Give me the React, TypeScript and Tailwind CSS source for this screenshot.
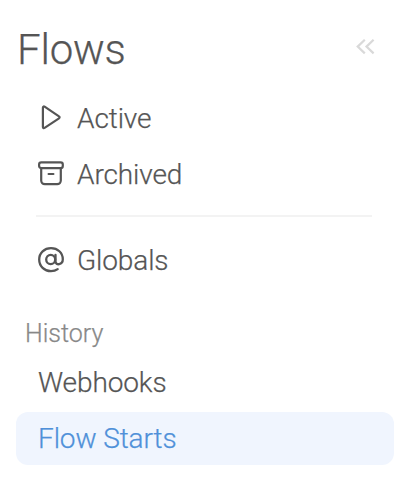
import type { ReactNode } from "react";

interface NavItemProps {
  label: string;
  icon?: ReactNode;
  active?: boolean;
}

const PlayIcon = () => (
  <svg width="26" height="26" viewBox="0 0 26 26" fill="none" stroke="currentColor" strokeWidth="2.2" strokeLinejoin="round">
    <path d="M4.9 2.7C4.9 1.6 5.7 1.2 6.6 1.7L21 11.4C21.8 11.9 21.8 12.8 21 13.3L6.6 22.9C5.7 23.4 4.9 23 4.9 21.9Z" />
  </svg>
);

const ArchiveIcon = () => (
  <svg width="26" height="26" viewBox="0 0 26 26" fill="none" stroke="currentColor" strokeWidth="2.2" strokeLinecap="round">
    <rect x="1.1" y="1.3" width="23.7" height="5.8" rx="2.2" />
    <path d="M3.2 7V19.6a3.6 3.6 0 0 0 3.6 3.6h12.4a3.6 3.6 0 0 0 3.6-3.6V7M10.6 13h4.8" />
  </svg>
);

const AtIcon = () => (
  <svg width="26" height="26" viewBox="0 0 26 26" fill="none" stroke="currentColor" strokeWidth="2.3" strokeLinecap="round">
    <ellipse cx="12.7" cy="12.5" rx="4.5" ry="4.7" />
    <path d="M17.5 7.8V14.3c0 4.5 7.3 3.8 7.3-2C24.8 5.7 19.6 1.2 13 1.2S1.2 5.8 1.2 12.5 6.4 24.1 13 24.1c2.6 0 4.9-.7 6.7-2" />
  </svg>
);

const NavItem = ({ label, icon, active }: NavItemProps) => (
  <a
    className={`flex h-[53px] items-center rounded-[12px] pl-[22px] text-[28px] leading-none tracking-[-0.1px] ${
      active ? "bg-[#f0f5fe] text-[#4f90d9]" : "text-[#555]"
    }`}
  >
    {icon && <span className="mb-[2px] mr-[13px] w-[26px] shrink-0">{icon}</span>}
    {label}
  </a>
);

export default function App() {
  return (
    <nav className="h-[484px] w-[418px] bg-white pl-4 pr-6 pt-[25px] font-['Roboto',sans-serif] font-light antialiased [-webkit-text-stroke:0.25px]">
      <header className="flex h-12 items-center justify-between pr-[19px] text-[#555]">
        <h1 className="pl-px pt-[2px] text-[42px] leading-none tracking-[-0.2px]">Flows</h1>
        <svg width="19" height="16" viewBox="0 0 19 16" fill="none" stroke="#d9d9d9" strokeWidth="2.2" className="-mt-1">
          <path d="M8.8.8 1.7 7.6l7.1 6.8M17.6.8l-7.1 6.8 7.1 6.8" />
        </svg>
      </header>
      <div className="mt-[19px] flex flex-col gap-[3px]">
        <NavItem label="Active" icon={<PlayIcon />} />
        <NavItem label="Archived" icon={<ArchiveIcon />} />
      </div>
      <hr className="ml-5 mr-[22px] mt-[14px] border-t-2 border-[#f3f3f3]" />
      <div className="mt-[17px]">
        <NavItem label="Globals" icon={<AtIcon />} />
      </div>
      <h2 className="mt-[31px] flex h-[30px] items-center pl-[9px] text-[25px] leading-none text-[#888]">
        History
      </h2>
      <div className="mt-2 flex flex-col gap-[3px]">
        <NavItem label="Webhooks" />
        <NavItem label="Flow Starts" active />
      </div>
    </nav>
  );
}
